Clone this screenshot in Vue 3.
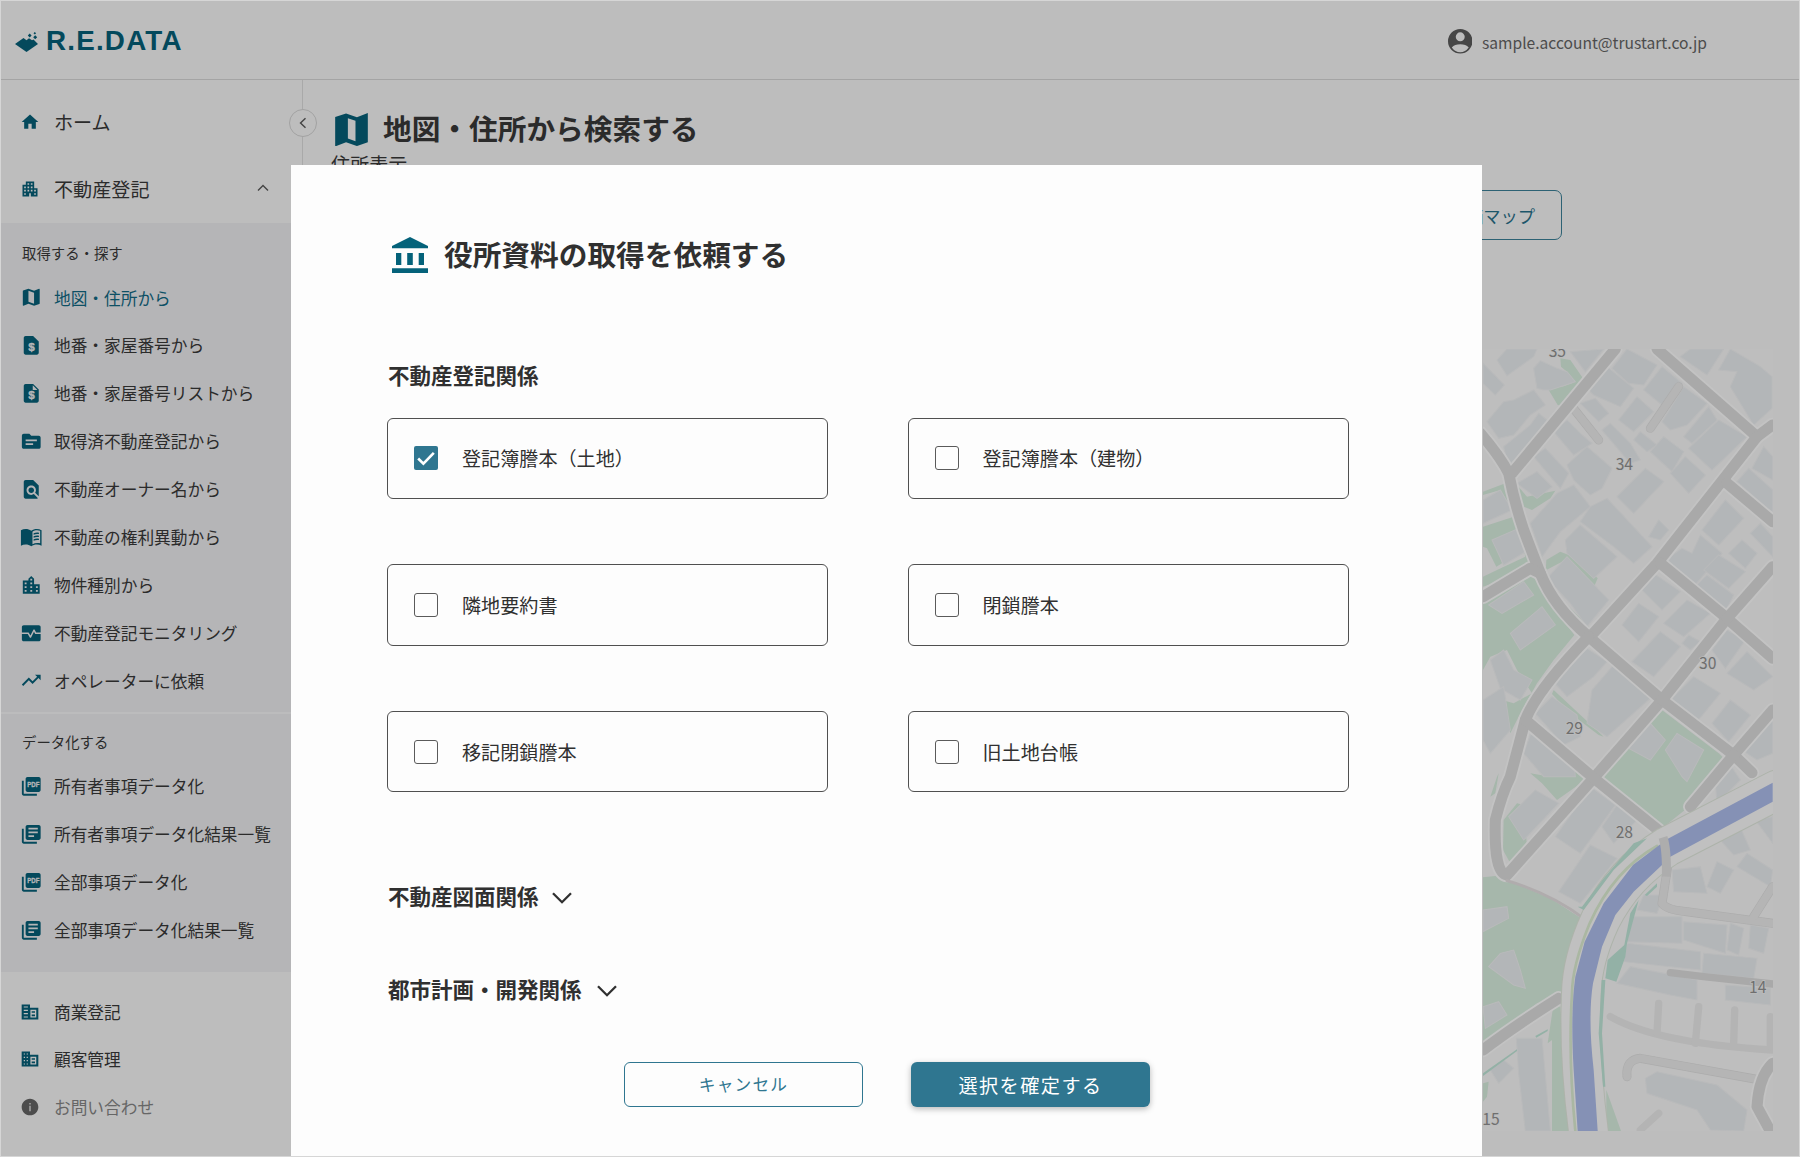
<script setup>
import { ref } from 'vue'

const icons = {
  home: 'M10 20v-6h4v6h5v-8h3L12 3 2 12h3v8z',
  apartment: 'M17 11V3H7v4H3v14h8v-4h2v4h8V11h-4zM7 19H5v-2h2v2zm0-4H5v-2h2v2zm0-4H5V9h2v2zm4 4H9v-2h2v2zm0-4H9V9h2v2zm0-4H9V5h2v2zm4 8h-2v-2h2v2zm0-4h-2V9h2v2zm0-4h-2V5h2v2zm4 12h-2v-2h2v2zm0-4h-2v-2h2v2z',
  map: 'M20.5 3l-.16.03L15 5.1 9 3 3.36 4.9c-.21.07-.36.25-.36.48V20.5c0 .28.22.5.5.5l.16-.03L9 18.9l6 2.1 5.64-1.9c.21-.07.36-.25.36-.48V3.5c0-.28-.22-.5-.5-.5zM15 19l-6-2.11V5l6 2.11V19z',
  quote: 'M14 2H6c-1.1 0-2 .9-2 2v16c0 1.1.9 2 2 2h12c1.1 0 2-.9 2-2V8z',
  quoteFold: 'M14 2H6c-1.1 0-2 .9-2 2v16c0 1.1.9 2 2 2h12c1.1 0 2-.9 2-2V8zM13.6 3.4L18.6 8.4H13.6z',
  topic: 'M20 6h-8l-2-2H4c-1.1 0-1.99.9-1.99 2L2 18c0 1.1.9 2 2 2h16c1.1 0 2-.9 2-2V8c0-1.1-.9-2-2-2zm-6 10H6v-2h8v2zm4-4H6v-2h12v2z',
  find: 'M20 19.59V8l-6-6H6c-1.1 0-1.99.9-1.99 2L4 20c0 1.1.89 2 1.99 2H18c.45 0 .85-.15 1.19-.4l-4.43-4.43c-.8.52-1.74.83-2.76.83-2.76 0-5-2.24-5-5s2.24-5 5-5 5 2.24 5 5c0 1.02-.31 1.96-.83 2.75L20 19.59zM9 13c0 1.66 1.34 3 3 3s3-1.34 3-3-1.34-3-3-3-3 1.34-3 3z',
  book: 'M12 5C8.800 2.600 4.300 2.500 1 4.500V21c3.300-1.700 7.800-1.600 11 .5 3.200-2.100 7.700-2.200 11-.5V4.500C19.700 2.500 15.200 2.600 12 5zM21.500 18.500c-3-.8-5.800-.4-8.200.9V6c2.400-1.700 5.400-2 8.200-1zM14.500 9.200c1.800-.8 3.700-1 5.700-.6v-1.400c-2-.4-3.900-.2-5.700.6zM14.500 12.400c1.800-.8 3.700-1 5.700-.6v-1.400c-2-.4-3.900-.2-5.700.6zM14.500 15.600c1.800-.8 3.700-1 5.700-.6v-1.400c-2-.4-3.900-.2-5.700.6z',
  city: 'M15 11V5l-3-3-3 3v2H3v14h18V11h-6zm-8 8H5v-2h2v2zm0-4H5v-2h2v2zm0-4H5V9h2v2zm6 8h-2v-2h2v2zm0-4h-2v-2h2v2zm0-4h-2V9h2v2zm0-4h-2V5h2v2zm6 12h-2v-2h2v2zm0-4h-2v-2h2v2z',
  monitor: 'M4 3.500h16c1.100 0 2 .8 2 1.900V11.300h-4.800l-1.700-3.300h-1.100l-3.300 6.400L9.200 11.300H2V5.400C2 4.300 2.900 3.500 4 3.500zM2 12.900h6.300l2.300 3.800h1.100l3.200-6.300 1.300 2.500H22v5.700c0 1.100-.9 1.900-2 1.900H4c-1.100 0-2-.8-2-1.900z',
  trend: 'M16 6l2.290 2.290-4.880 4.880-4-4L2 16.590 3.410 18l6-6 4 4 6.300-6.290L22 12V6z',
  pdf: 'M20 2H8c-1.100 0-2 .9-2 2v12c0 1.100.9 2 2 2h12c1.100 0 2-.9 2-2V4c0-1.100-.9-2-2-2zM4 6H2v14c0 1.100.9 2 2 2h14v-2H4z',
  library: 'M4 6H2v14c0 1.100.9 2 2 2h14v-2H4V6zm16-4H8c-1.100 0-2 .9-2 2v12c0 1.100.9 2 2 2h12c1.100 0 2-.9 2-2V4c0-1.100-.9-2-2-2zm-1 9H9V9h10v2zm-4 4H9v-2h6v2zm4-8H9V5h10v2z',
  company: 'M12 7V3H2v18h20V7H12zM9.500 18.700H4.500v-1.400h5v1.400zm0-4H4.500v-1.400h5v1.400zm0-4H4.500V9.300h5v1.400zm0-4H4.500V5.300h5v1.400zm10 12h-7V9.300h7v9.400zm-1.500-7.700h-4v2h4v-2zm0 4h-4v2h4v-2z',
  domain: 'M12 7V3H2v18h20V7H12zM6 18.700H4.500v-1.400h1.500v1.400zm0-4H4.500v-1.400h1.500v1.400zm0-4H4.500V9.300h1.500v1.400zm0-4H4.500V5.300h1.500v1.400zm3.500 12H8v-1.400h1.500v1.400zm0-4H8v-1.400h1.500v1.400zm0-4H8V9.300h1.500v1.400zm0-4H8V5.300h1.500v1.400zm10 12h-7V9.300h7v9.400zm-1.500-7.700h-4v2h4v-2zm0 4h-4v2h4v-2z',
  info: 'M12 2C6.480 2 2 6.480 2 12s4.480 10 10 10 10-4.480 10-10S17.520 2 12 2zm.7 15h-1.400v-6.500h1.400v6.500zm0-8h-1.400V7.300h1.400V9z'
}

const searchItems = [
  { icon: 'map', label: '地図・住所から', active: true },
  { icon: 'quote', label: '地番・家屋番号から', mark: '$' },
  { icon: 'quoteFold', label: '地番・家屋番号リストから', mark: '$' },
  { icon: 'topic', label: '取得済不動産登記から' },
  { icon: 'find', label: '不動産オーナー名から' },
  { icon: 'book', label: '不動産の権利異動から' },
  { icon: 'city', label: '物件種別から' },
  { icon: 'monitor', label: '不動産登記モニタリング' },
  { icon: 'trend', label: 'オペレーターに依頼' }
]
const dataItems = [
  { icon: 'pdf', label: '所有者事項データ化', mark: 'PDF' },
  { icon: 'library', label: '所有者事項データ化結果一覧' },
  { icon: 'pdf', label: '全部事項データ化', mark: 'PDF' },
  { icon: 'library', label: '全部事項データ化結果一覧' }
]
const bottomItems = [
  { icon: 'company', label: '商業登記' },
  { icon: 'domain', label: '顧客管理' },
  { icon: 'info', label: 'お問い合わせ', muted: true }
]
const groups = [
  { name: 'search', title: '取得する・探す', items: searchItems },
  { name: 'data', title: 'データ化する', items: dataItems },
  { name: 'other', title: '', items: bottomItems }
]

const options = ref([
  { label: '登記簿謄本（土地）', checked: true },
  { label: '登記簿謄本（建物）', checked: false },
  { label: '隣地要約書', checked: false },
  { label: '閉鎖謄本', checked: false },
  { label: '移記閉鎖謄本', checked: false },
  { label: '旧土地台帳', checked: false }
])

const greens = [
  '270,55 300,60 345,125 290,200 262,195 232,145 275,140 305,130 290,95 272,80',
  '38,455 105,430 130,520 165,610 185,690 38,740 38,710 80,690 165,650 150,570 100,595 75,605 95,670 78,680 50,625 38,620 38,560 130,530 115,490 90,450 38,465',
  '140,435 170,470 255,452 240,475 185,510 160,500',
  '228,660 270,635 320,655 382,715 372,738 320,690 285,660 228,690 262,765 355,860 340,868 270,800 225,720',
  '38,780 190,700 225,770 312,885 250,960 200,1030 150,1120 120,1180 95,1080 130,1090 185,1060 140,990 110,930 60,950 38,990',
  '250,1050 400,1190 385,1185 300,1120 245,1062',
  '575,1110 745,1240 775,1270 650,1405 575,1465 390,1305 470,1215',
  '180,1300 240,1310 330,1290 345,1320 260,1380 215,1330',
  '85,1300 75,1360 60,1370 80,1310',
  '100,1440 140,1390 180,1400 165,1460 170,1520 120,1570 98,1530',
  '38,1612 75,1608 110,1620 240,1675 340,1740 300,1850 275,1970 200,1990 120,2050 38,2115',
  '250,1990 270,2000 290,2250 298,2373 245,2373 245,2100 232,2110',
  '408,2250 452,2373 408,2373',
  '38,2230 55,2225 50,2270 38,2285'
]
const teals = [
  '322,1700 340,1710 430,1590 530,1495 490,1510 400,1615 335,1700',
  '523,1665 560,1630 560,1640 530,1668',
  '480,1720 505,1680 470,1810 465,1850 438,1925 405,1915 412,1860 462,1815',
  '405,1920 395,2080 405,2240 398,2240 385,2080 394,1920',
  '38,2200 140,2128 140,2133 38,2208',
  '195,2088 232,2068 232,2073 198,2093'
]
const buildings = [
  '80,60 110,27 200,27 190,50 110,107', '38,70 102,135 75,165 38,130', '190,85 210,62 260,85 290,95 315,125 240,150 220,150 200,145',
  '50,245 100,185 130,180 190,150 225,195 180,225 130,285 85,295', '100,320 180,255 205,220 230,240 150,350 115,385', '300,35 400,27 345,95',
  '355,150 410,80 490,145 450,200 370,165', '425,85 470,27 560,75 520,135 475,130', '520,150 575,80 635,130 575,195', '445,240 500,170 550,215 490,275',
  '330,190 375,175 415,220 385,245', '250,275 290,240 335,285 365,310 310,345', '395,270 420,250 480,310 510,360 480,370', '490,300 510,275 560,315 530,335',
  '575,245 640,140 710,190 650,255 600,270', '640,290 715,200 740,240 665,310', '655,325 745,240 830,290 725,390', '540,335 580,290 640,335 605,395',
  '600,400 645,350 705,405 655,460', '440,470 525,385 580,425 490,520', '190,350 225,325 295,400 270,445', '140,430 200,395 245,440 200,475',
  '290,375 350,320 425,385 395,445 360,465 310,420', '180,550 260,460 310,435 360,500 270,575 215,650', '360,500 410,475 545,620 490,670 430,620 330,545',
  '285,600 330,555 440,650 370,715 290,640', '535,590 565,540 595,570 570,600', '230,715 290,650 415,780 350,860 300,790',
  '630,50 660,27 760,27 710,105', '745,90 780,27 870,80 905,110 905,205 850,255 780,140 800,95', '845,385 880,320 907,350 907,420',
  '800,425 835,385 907,450 907,520', '695,570 765,480 820,535 745,615', '585,660 635,625 665,640 690,585 755,640 670,740', '775,640 815,600 860,640 825,685',
  '700,690 745,645 825,695 775,745', '840,580 870,550 907,590 907,650', '665,750 710,705 790,765 765,815', '515,750 550,700 630,755 575,810',
  '455,855 505,790 565,830 505,905', '580,850 650,780 720,820 640,890', '485,965 570,875 630,920 550,1010', '635,910 655,885 690,905 660,930',
  '725,930 770,870 825,900 765,985', '770,1000 830,935 907,1010 850,1050', '600,1080 670,1010 750,1060 680,1145', '725,1150 780,1080 840,1125 775,1205',
  '250,1025 350,925 410,965 370,1010 290,1070', '365,1050 430,975 545,1070 410,1190 350,1150', '195,1120 245,1070 320,1125 330,1190 280,1215',
  '38,480 90,450 125,510 38,550', '65,600 145,565 165,635 100,675', '55,795 160,725 190,765 95,820', '120,880 215,800 255,855 150,930',
  '60,960 100,930 130,990 185,1020 150,1080 90,1045', '38,1080 100,1040 120,1170 60,1240 38,1200', '180,1185 230,1170 310,1260 315,1310 220,1310 160,1240',
  '800,1220 907,1130 907,1240 860,1260', '475,1225 540,1150 585,1200 540,1260', '585,1230 620,1180 700,1230 650,1325 635,1310',
  '115,1430 195,1350 265,1390 160,1500', '255,1490 360,1340 435,1395 330,1540', '395,1460 440,1395 500,1440 430,1510', '265,1655 360,1515 440,1555 330,1690',
  '735,1330 780,1275 810,1320 740,1390', '750,1500 800,1440 840,1530 790,1545', '855,1440 907,1430 907,1510', '800,1580 830,1540 907,1590 900,1640',
  '605,1590 690,1580 710,1660 610,1655', '710,1640 740,1565 790,1590 750,1660', '500,1710 520,1665 580,1665 560,1720', '485,1730 635,1730 635,1810 470,1805',
  '640,1745 770,1755 765,1840 640,1800', '780,1750 820,1765 805,1845 770,1830', '840,1755 895,1765 880,1840 835,1825', '470,1810 690,1835 690,1890 460,1865',
  '700,1840 860,1855 850,1915 695,1900', '440,1930 480,1880 680,1920 680,1980 600,1965', '765,1935 900,1945 900,1995 765,1980',
  '138,2095 215,2095 240,2373 165,2373 145,2200', '525,2215 560,2195 740,2235 830,2310 820,2373 720,2370 680,2310 530,2260',
  '38,1710 110,1700 115,1735 38,1775', '55,1880 90,1840 130,1830 150,1890 165,1945 130,1935', '38,2000 85,1985 110,2025 45,2065', '60,2190 100,2160 130,2185 85,2230'
]
const roads = [
  'M435 27L125 400', 'M30 280Q90 350 115 400Q130 480 160 570Q190 650 210 700Q250 800 355 890', 'M210 700L180 685L38 770',
  'M560 27L860 290L907 255', 'M860 290L560 670L355 895', 'M355 890L575 1080L790 1245L845 1298', 'M575 1080L365 1320L110 1605Q70 1600 75 1440Q95 1360 120 1310L165 1140Q200 1050 355 890',
  'M770 430L907 545', 'M570 670L770 835L907 955', 'M770 835L575 1080', 'M907 680L770 835', 'M165 1140L365 1310L570 1475', 'M790 1245L907 1110', 'M790 1245L660 1400',
  'M38 2130Q130 2060 265 1975', 'M907 2170Q865 2210 860 2300L900 2373'
]
const lanes = [
  'M305 200L385 300', 'M625 140L540 265', 'M580 1500L595 1560L575 1690Q590 1710 650 1715L907 1750', 'M850 1730L907 1640',
  'M470 2210Q465 2160 510 2155L870 2220'
]
const paths = [
  'M420 2030Q560 2110 907 2130', 'M565 1990L560 2080', 'M685 2000L675 2110', 'M793 2010L790 2110', 'M900 2030V2120', 'M510 2370L565 2320'
]
const lots = [
  { n: '35', x: 235, y: 50 }, { n: '34', x: 436, y: 391 }, { n: '30', x: 686, y: 986 }, { n: '29', x: 286, y: 1183 },
  { n: '28', x: 436, y: 1495 }, { n: '14', x: 836, y: 1960 }, { n: '15', x: 36, y: 2355 }
]
</script>

<template>
  <div class="app">
    <header class="header">
      <div class="brand">
        <svg class="brand-mark" viewBox="0 0 24 20">
          <path d="M0 12L8.500 6L11.500 8.300L14 6.300L17 8.300L18.500 7.500L23 12L11.500 20z" />
          <path d="M14.700 1.600l1.900 1.900-1.900 1.900-1.900-1.900zM20.200 3.200l2 2-2 2-2-2zM19.800 0l1.300 1.300-1.300 1.300-1.300-1.300z" />
        </svg>
        <span class="brand-name">R.E.DATA</span>
      </div>
      <div class="account">
        <svg class="avatar" viewBox="0 0 24 24">
          <path fill-rule="evenodd" d="M12 0a12 12 0 1 0 0 24a12 12 0 1 0 0-24zM12 3.300a4.400 4.400 0 1 1 0 8.800a4.400 4.400 0 1 1 0-8.800zM3.700 18.200Q6.500 15 12 15T20.300 18.200Q17 22.800 12 22.800T3.700 18.200z" />
        </svg>
        <span>sample.account@trustart.co.jp</span>
      </div>
    </header>

    <div class="body">
      <aside class="sidebar">
        <nav class="primary">
          <a class="item main">
            <svg class="icon" viewBox="0 0 24 24"><path :d="icons.home" /></svg><span>ホーム</span>
          </a>
          <a class="item main">
            <svg class="icon" viewBox="0 0 24 24"><path :d="icons.apartment" /></svg><span>不動産登記</span>
            <svg class="caret" viewBox="0 0 12 8"><path d="M1 6.500L6 1.500L11 6.500" /></svg>
          </a>
        </nav>
        <nav v-for="group in groups" :key="group.name" class="group" :class="group.name">
          <p v-if="group.title" class="group-title">{{ group.title }}</p>
          <a v-for="item in group.items" :key="item.label" class="item" :class="{ active: item.active, muted: item.muted }">
            <svg class="icon" viewBox="0 0 24 24">
              <path fill-rule="evenodd" :d="icons[item.icon]" />
              <text v-if="item.mark === '$'" class="mark dollar" x="12.300" y="18">$</text>
              <text v-if="item.mark === 'PDF'" class="mark" x="7.800" y="12.900" textLength="13" lengthAdjust="spacingAndGlyphs">PDF</text>
            </svg>
            <span>{{ item.label }}</span>
          </a>
        </nav>
      </aside>

      <main class="content">
        <button class="collapse"><svg viewBox="0 0 8 12"><path d="M6.500 1.200L1.500 6L6.500 10.800" /></svg></button>
        <h1 class="page-title">
          <svg viewBox="3 2.770 18 18.200"><path d="M15 5.100 9 3 3 5.020v16.200l6-2.330 6 2.100 6-2.020V2.770zM14.200 18.300l-4.200-1.500V5.600l4.200 1.500z" /></svg>
          <span>地図・住所から検索する</span>
        </h1>
        <p class="page-sub">住所表示</p>
        <div class="tools"><button class="map-button">路線価マップ</button></div>
        <svg class="map" viewBox="38 27 869 2346" preserveAspectRatio="none">
          <rect x="38" y="27" width="869" height="2346" fill="#bebebe" />
          <polygon v-for="p in greens" :key="p" :points="p" fill="#a6b7ab" />
          <polygon v-for="p in buildings" :key="p" :points="p" class="building" />
          <path v-for="d in paths" :key="d" :d="d" class="lane path" />
          <path v-for="d in lanes" :key="d" :d="d" class="lane-edge" />
          <path v-for="d in lanes" :key="d + 'l'" :d="d" class="lane" />
          <path v-for="d in roads" :key="d" :d="d" class="road-edge" />
          <path v-for="d in roads" :key="d + 'r'" :d="d" class="road" />
          <path d="M600 1898L700 1910L907 1932" class="road alley" />
          <path d="M110 1622Q240 1660 340 1735" class="trail" />
          <path d="M920 1350L590 1520Q460 1600 390 1740Q335 1860 333 1960Q325 2150 355 2380" class="bank" />
          <path d="M920 1350L590 1520Q460 1600 390 1740Q335 1860 333 1960Q325 2150 355 2380" class="bank-inner" />
          <path d="M560 1518Q430 1590 358 1750Q305 1880 305 1960Q293 2150 315 2373" class="verge" />
          <polygon v-for="p in teals" :key="p" :points="p" fill="#93b1a6" />
          <path d="M907 1328L590 1498L488 1575L400 1690L343 1805L315 1910Q300 2020 310 2190L322 2373H382L370 2190Q352 2030 368 1930L395 1820L435 1725L490 1655L575 1575L600 1550L907 1385z" fill="#8591b5" />
          <path d="M578 1492Q590 1530 588 1610" class="bridge" />
          <text v-for="lot in lots" :key="lot.n" :x="lot.x" :y="lot.y" class="lot">{{ lot.n }}</text>
        </svg>
      </main>
    </div>

    <section class="modal">
      <h2 class="modal-title">
        <svg viewBox="0 0 36 36"><path d="M18 0L36 9V11.300H0V9zM4 16h5.300v12H4zM15.200 16h5.600v12h-5.600zM26.700 16H32v12h-5.300zM0 31.200h36V36H0z" /></svg>
        <span>役所資料の取得を依頼する</span>
      </h2>
      <h3 class="section-title first">不動産登記関係</h3>
      <div class="options">
        <label v-for="option in options" :key="option.label" class="option" @click="option.checked = !option.checked">
          <span class="box" :class="{ checked: option.checked }">
            <svg v-if="option.checked" viewBox="0 0 23 23"><path d="M4 12L9 17L19 6.500" /></svg>
          </span>
          <span>{{ option.label }}</span>
        </label>
      </div>
      <h3 class="section-title drawings">不動産図面関係<svg viewBox="0 0 20 12"><path d="M1 1.200L10 10.200L19 1.200" /></svg></h3>
      <h3 class="section-title planning">都市計画・開発関係<svg viewBox="0 0 20 12"><path d="M1 1.200L10 10.200L19 1.200" /></svg></h3>
      <div class="actions">
        <button class="cancel">キャンセル</button>
        <button class="confirm">選択を確定する</button>
      </div>
    </section>
  </div>
</template>

<style>
body {
  margin: 0;
  overflow: hidden;
}
</style>

<style scoped>
* {
  box-sizing: border-box;
}
.app {
  position: relative;
  width: 1800px;
  height: 1157px;
  overflow: hidden;
  background: #bdbdbd;
  border: 1px solid #d6d6d6;
  color: #2b2b2b;
  font-family: 'Noto Sans CJK JP', sans-serif;
  font-size: 16.7px;
  display: flex;
  flex-direction: column;
}
svg {
  display: block;
  flex: none;
}
p, h1, h2, h3 {
  margin: 0;
}
button {
  font-family: inherit;
  padding: 0;
}
.header {
  height: 79px;
  flex: none;
  border-bottom: 1px solid #a4a4a4;
  display: flex;
  align-items: center;
  justify-content: space-between;
  padding: 4px 92px 0 14px;
}
.brand {
  display: flex;
  align-items: center;
  color: #04495c;
}
.brand-mark {
  width: 24px;
  height: 20px;
  fill: #04495c;
}
.brand-name {
  font: bold 27.800px/30px 'Liberation Sans', sans-serif;
  letter-spacing: 1.200px;
  margin: -3px 0 0 7px;
}
.account {
  display: flex;
  align-items: center;
  gap: 10px;
  color: #4c4c4c;
  font-size: 15.600px;
  margin-top: -1px;
}
.avatar {
  width: 24.500px;
  height: 24.500px;
  fill: #464646;
}
.body {
  display: flex;
  flex: 1;
  min-height: 0;
}
.sidebar {
  width: 302px;
  flex: none;
  border-right: 1px solid #a9a9a9;
}
.primary {
  height: 143px;
  padding-top: 8px;
}
.item {
  display: flex;
  align-items: center;
  height: 47.900px;
  padding-left: 19px;
  white-space: nowrap;
}
.item.main {
  height: 67.500px;
  font-size: 19.100px;
}
.icon {
  width: 22.500px;
  height: 22.500px;
  margin-right: 11.500px;
  fill: #04495c;
}
.main .icon {
  width: 20px;
  height: 20px;
  margin-right: 14px;
}
.caret {
  width: 12px;
  height: 8px;
  margin: -3px 0 0 108px;
  fill: none;
  stroke: #444;
  stroke-width: 1.400;
}
.mark {
  font: bold 8.500px 'Liberation Sans', sans-serif;
  fill: #b5b5b7;
  stroke: #b5b5b7;
  stroke-width: 0.400;
}
.mark.dollar {
  font-size: 12.500px;
  text-anchor: middle;
}
.group {
  background: #b5b5b7;
}
.search {
  height: 489px;
  padding-top: 20px;
}
.data {
  height: 260px;
  border-top: 2px solid #bcbcbd;
  padding-top: 18px;
}
.other {
  background: none;
  padding-top: 16px;
}
.other .item {
  height: 47.500px;
}
.other .icon {
  width: 20px;
  height: 20px;
  margin-right: 14px;
}
.group-title {
  font-size: 14.400px;
  line-height: 20px;
  padding-left: 21px;
  margin-bottom: 10.600px;
}
.data .group-title {
  margin-bottom: 10.400px;
}
.active {
  color: #0d5065;
}
.muted {
  color: #666;
}
.muted .icon {
  fill: #4d4d4d;
}
.content {
  position: relative;
  flex: 1;
}
.collapse {
  position: absolute;
  left: -14.500px;
  top: 29px;
  width: 28px;
  height: 28px;
  border: 1px solid #a2a2a2;
  border-radius: 50%;
  background: #bdbdbd;
  display: grid;
  place-items: center;
}
.collapse svg {
  width: 8px;
  height: 12px;
  fill: none;
  stroke: #444;
  stroke-width: 1.400;
}
.page-title {
  display: flex;
  align-items: center;
  height: 42px;
  margin: 27px 0 0 32px;
  font-size: 28.700px;
  line-height: 42px;
}
.page-title svg {
  width: 33px;
  height: 33px;
  margin: 2px 15px 0 0;
  fill: #04495c;
}
.page-sub {
  font-size: 19.100px;
  line-height: 28px;
  margin: 1px 0 0 28px;
}
.tools {
  display: flex;
  justify-content: flex-end;
  padding: 12px 237px 0 0;
}
.map-button {
  width: 190px;
  height: 50px;
  border: 1.500px solid #2d6274;
  border-radius: 7px;
  background: none;
  color: #1c566a;
  font-size: 17.300px;
  text-align: right;
  padding-right: 26px;
}
.map {
  width: 289.700px;
  height: 782px;
  margin: 109px 0 0 auto;
  margin-right: 26.500px;
}
.building {
  fill: #b3b6b8;
  stroke: #b9babb;
  stroke-width: 3;
}
.road-edge,
.road,
.lane,
.lane-edge,
.trail,
.bank,
.bank-inner,
.verge,
.bridge {
  fill: none;
  stroke-linecap: round;
  stroke-linejoin: round;
}
.road-edge {
  stroke: #c3c3c3;
  stroke-width: 44;
}
.road {
  stroke: #a9a9a9;
  stroke-width: 33;
}
.road.alley {
  stroke-width: 22;
}
.lane-edge {
  stroke: #acacac;
  stroke-width: 27;
}
.lane {
  stroke: #b5b5b5;
  stroke-width: 23;
}
.lane.path {
  stroke: #b4b4b4;
  stroke-width: 22;
}
.trail {
  stroke: #b0acad;
  stroke-width: 9;
}
.bank {
  stroke: #adb3aa;
  stroke-width: 122;
}
.bank-inner {
  stroke: #c0c0c0;
  stroke-width: 116;
}
.verge {
  stroke: #aab7a2;
  stroke-width: 8;
}
.bridge {
  stroke: #adadad;
  stroke-width: 27;
  stroke-linecap: butt;
}
.lot {
  font-size: 47px;
  fill: #6f6f6f;
  stroke: #bcbcbc;
  stroke-width: 5;
  paint-order: stroke;
}
.modal {
  position: absolute;
  left: 290px;
  top: 164px;
  width: 1191px;
  height: 991px;
  background: #fdfdfd;
  color: #303030;
  padding: 66px 96px 0;
}
.modal-title {
  display: flex;
  align-items: center;
  height: 44px;
  font-size: 28.700px;
  padding-left: 5px;
}
.modal-title svg {
  width: 36px;
  height: 36px;
  margin: 4px 16px 0 0;
  fill: #04627a;
}
.section-title {
  display: flex;
  align-items: center;
  height: 32px;
  font-size: 21.500px;
  padding-left: 1px;
}
.section-title.first {
  margin-top: 83px;
}
.section-title svg {
  width: 20px;
  height: 12px;
  margin: 4px 0 0 13px;
  fill: none;
  stroke: #303030;
  stroke-width: 2.300;
}
.section-title.planning svg {
  margin-left: 15px;
}
.options {
  display: grid;
  grid-template-columns: 441px 441px;
  grid-auto-rows: 81.500px;
  gap: 65.200px 79.500px;
  margin-top: 27.500px;
}
.option {
  display: flex;
  align-items: center;
  border: 1px solid #505050;
  border-radius: 6px;
  padding-left: 26px;
  font-size: 19.100px;
}
.box {
  width: 24px;
  height: 24px;
  border: 1.500px solid #5a5a5a;
  border-radius: 3px;
  margin-right: 24px;
}
.box.checked {
  border: 0;
  background: #2f7690;
  border-radius: 2px;
}
.box svg {
  fill: none;
  stroke: #fff;
  stroke-width: 2.500;
}
.drawings {
  margin-top: 87.500px;
}
.planning {
  margin-top: 61px;
}
.actions {
  display: flex;
  gap: 48px;
  margin: 57.500px 0 0 237px;
}
.actions button {
  width: 239px;
  height: 45px;
  border-radius: 6px;
}
.cancel {
  border: 1px solid #2f7690;
  background: #fdfdfd;
  color: #2f7690;
  font-size: 16.700px;
  letter-spacing: 1.200px;
  padding-bottom: 1px;
}
.confirm {
  border: 0;
  background: #2f7690;
  color: #fff;
  font-size: 19.100px;
  letter-spacing: 1.500px;
  box-shadow: 0 2px 6px rgba(0, 0, 0, 0.28);
}
</style>
